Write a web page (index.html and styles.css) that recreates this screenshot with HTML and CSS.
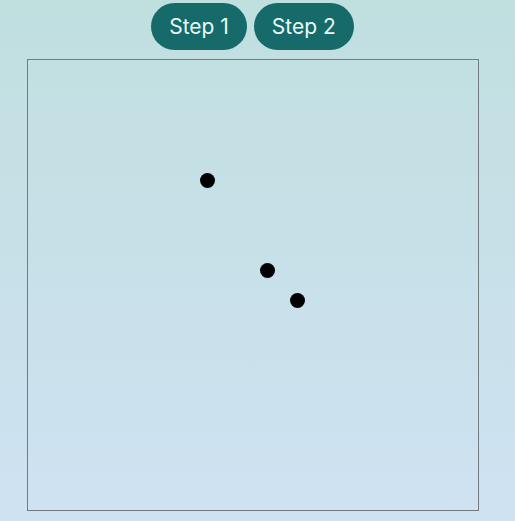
FILE: index.html
```html
<!DOCTYPE html>
<html>
<head>
<meta charset="utf-8">
<link rel="stylesheet" href="styles.css">
</head>
<body>
<div class="app">
  <div class="controls">
    <button class="btn">Step 1</button>
    <button class="btn">Step 2</button>
  </div>
  <div class="canvas">
    <span class="dot" style="left:180px;top:120px"></span>
    <span class="dot" style="left:240px;top:210px"></span>
    <span class="dot" style="left:270px;top:240px"></span>
  </div>
</div>
</body>
</html>
```
FILE: styles.css
```css
html, body {
  margin: 0;
  padding: 0;
}
body {
  min-height: 521px;
  background: linear-gradient(to bottom, #c0dfdf 0%, #cfe2f2 100%);
  font-family: Inter, "Noto Sans", sans-serif;
}
.app {
  width: 505px;
  display: flex;
  flex-direction: column;
  align-items: center;
  padding-top: 3px;
  gap: 9px;
}
.controls {
  display: flex;
  gap: 7px;
}
.btn {
  height: 47px;
  padding: 0 18px;
  border: none;
  border-radius: 24px;
  background: #166a6a;
  color: #e8f8f6;
  font-family: Inter, "Noto Sans", sans-serif;
  font-size: 21px;
  cursor: pointer;
}
.canvas {
  position: relative;
  width: 450px;
  height: 450px;
  border: 1px solid #737b80;
}
.dot {
  position: absolute;
  width: 15px;
  height: 15px;
  margin: -7.5px 0 0 -7.5px;
  border-radius: 50%;
  background: #000;
}
```
